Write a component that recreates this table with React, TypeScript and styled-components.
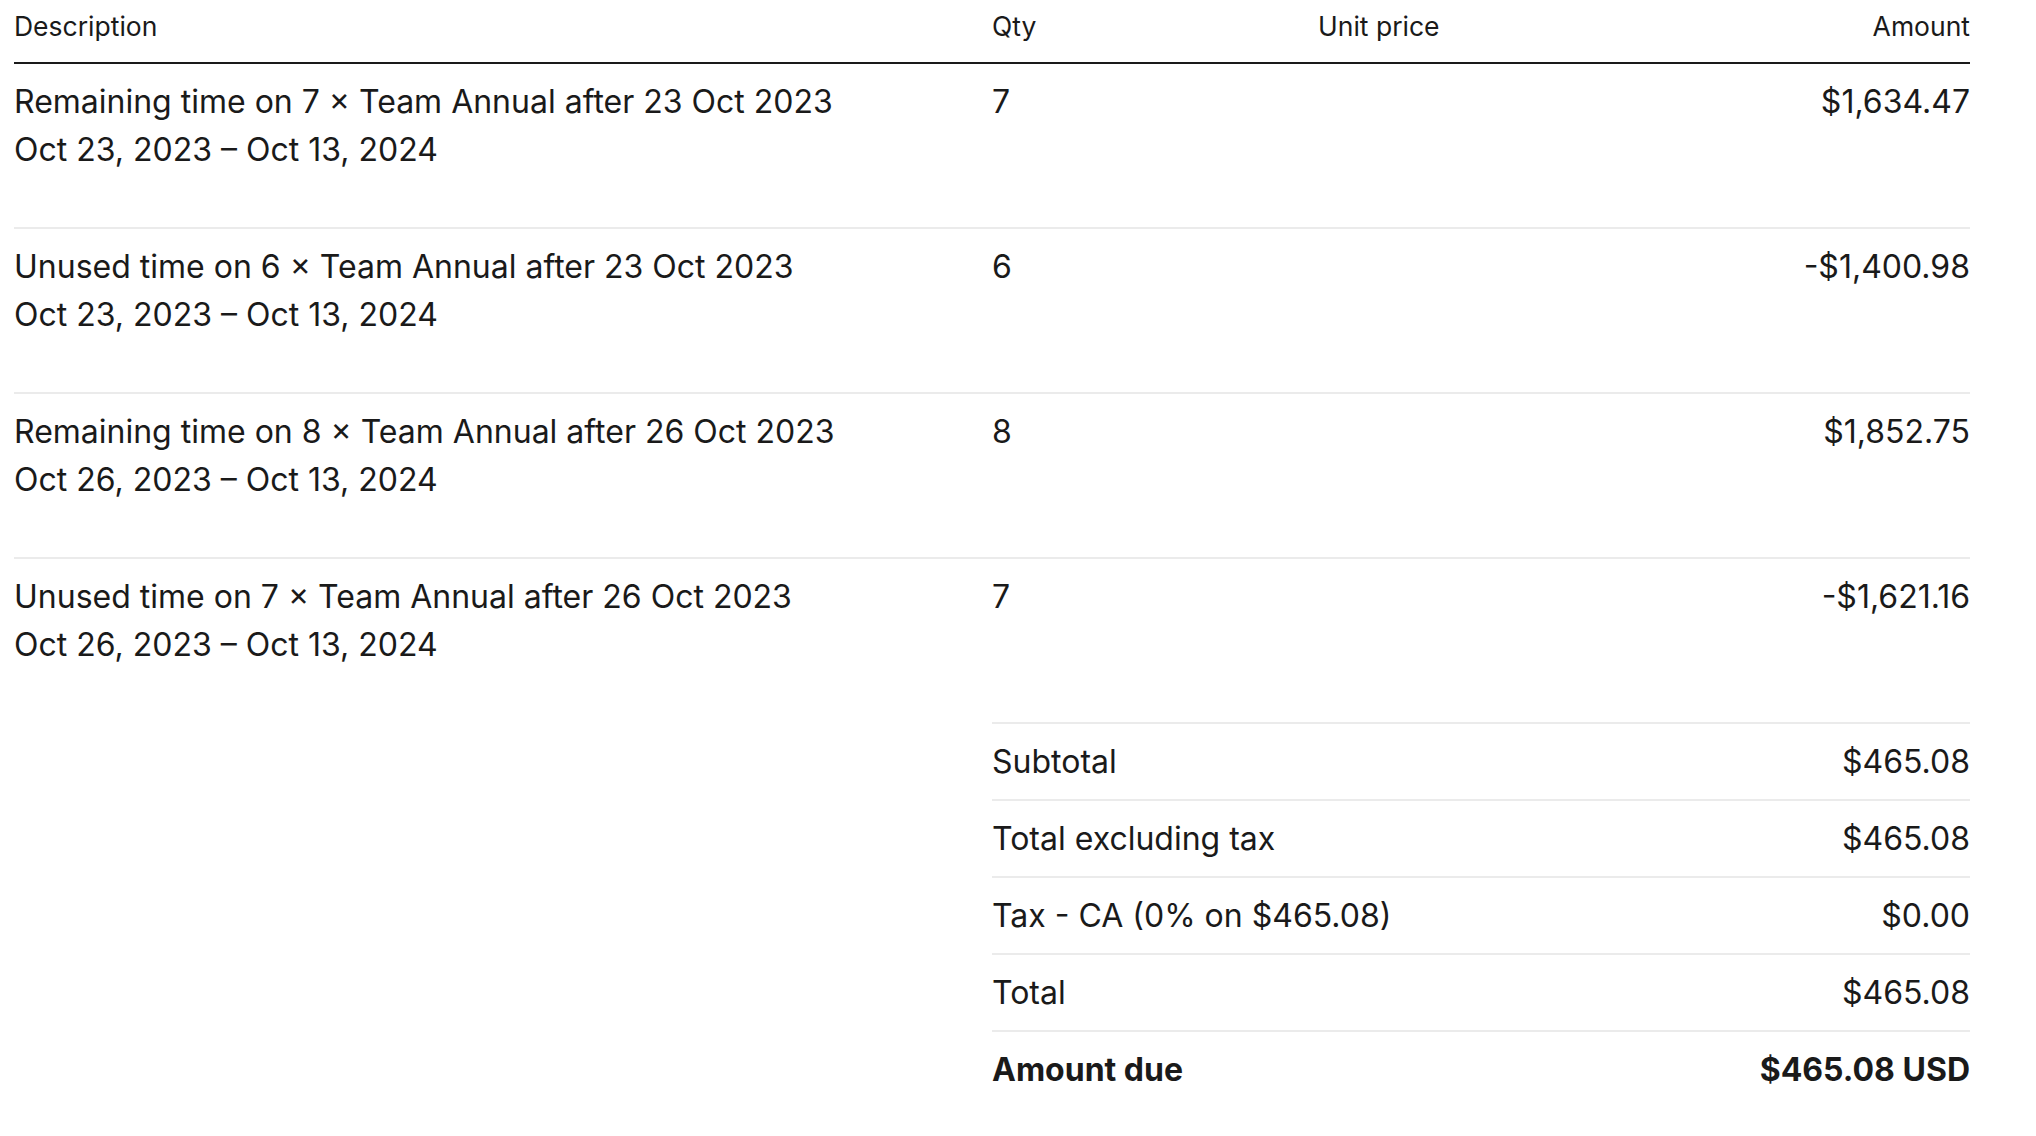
import React from "react";
import styled, { createGlobalStyle } from "styled-components";

const Global = createGlobalStyle`
  html, body { margin: 0; padding: 0; background: #ffffff; }
  body { font-family: Inter, "Noto Sans", "Liberation Sans", sans-serif; color: #1a1a1a; }
`;

const Page = styled.div`
  width: 1956px;
  margin-left: 14px;
`;

const Grid = styled.div`
  display: grid;
  grid-template-columns: 6fr 2fr 2fr 2fr;
`;

const HeadRow = styled(Grid)`
  border-bottom: 2px solid #1a1a1a;
`;

const HeadCell = styled.div<{ $right?: boolean }>`
  font-size: 26.5px;
  line-height: 39px;
  padding: 7px 0 16px;
  text-align: ${(p) => (p.$right ? "right" : "left")};
`;

const ItemRow = styled(Grid)`
  & + & {
    border-top: 2px solid #ebebeb;
  }
`;

const Cell = styled.div<{ $right?: boolean }>`
  font-size: 32px;
  line-height: 48px;
  padding: 14px 0 53px;
  text-align: ${(p) => (p.$right ? "right" : "left")};
`;

const Line = styled.div``;

const Totals = styled.div`
  margin-left: 978px;
  border-top: 2px solid #ebebeb;
`;

const TotalRow = styled.div<{ $strong?: boolean }>`
  display: flex;
  justify-content: space-between;
  align-items: center;
  font-size: 32px;
  line-height: 48px;
  padding: 14px 0 13px;
  font-weight: ${(p) => (p.$strong ? 700 : 400)};
  & + & {
    border-top: 2px solid #ebebeb;
  }
`;

const items = [
  { desc: "Remaining time on 7 × Team Annual after 23 Oct 2023", period: "Oct 23, 2023 – Oct 13, 2024", qty: "7", amount: "$1,634.47" },
  { desc: "Unused time on 6 × Team Annual after 23 Oct 2023", period: "Oct 23, 2023 – Oct 13, 2024", qty: "6", amount: "-$1,400.98" },
  { desc: "Remaining time on 8 × Team Annual after 26 Oct 2023", period: "Oct 26, 2023 – Oct 13, 2024", qty: "8", amount: "$1,852.75" },
  { desc: "Unused time on 7 × Team Annual after 26 Oct 2023", period: "Oct 26, 2023 – Oct 13, 2024", qty: "7", amount: "-$1,621.16" },
];

const totals = [
  { label: "Subtotal", value: "$465.08" },
  { label: "Total excluding tax", value: "$465.08" },
  { label: "Tax - CA (0% on $465.08)", value: "$0.00" },
  { label: "Total", value: "$465.08" },
  { label: "Amount due", value: "$465.08 USD", strong: true },
];

export default function App() {
  return (
    <Page>
      <Global />
      <HeadRow>
        <HeadCell>Description</HeadCell>
        <HeadCell>Qty</HeadCell>
        <HeadCell>Unit price</HeadCell>
        <HeadCell $right>Amount</HeadCell>
      </HeadRow>
      {items.map((it, i) => (
        <ItemRow key={i}>
          <Cell>
            <Line>{it.desc}</Line>
            <Line>{it.period}</Line>
          </Cell>
          <Cell>{it.qty}</Cell>
          <Cell />
          <Cell $right>{it.amount}</Cell>
        </ItemRow>
      ))}
      <Totals>
        {totals.map((t, i) => (
          <TotalRow key={i} $strong={t.strong}>
            <span>{t.label}</span>
            <span>{t.value}</span>
          </TotalRow>
        ))}
      </Totals>
    </Page>
  );
}
